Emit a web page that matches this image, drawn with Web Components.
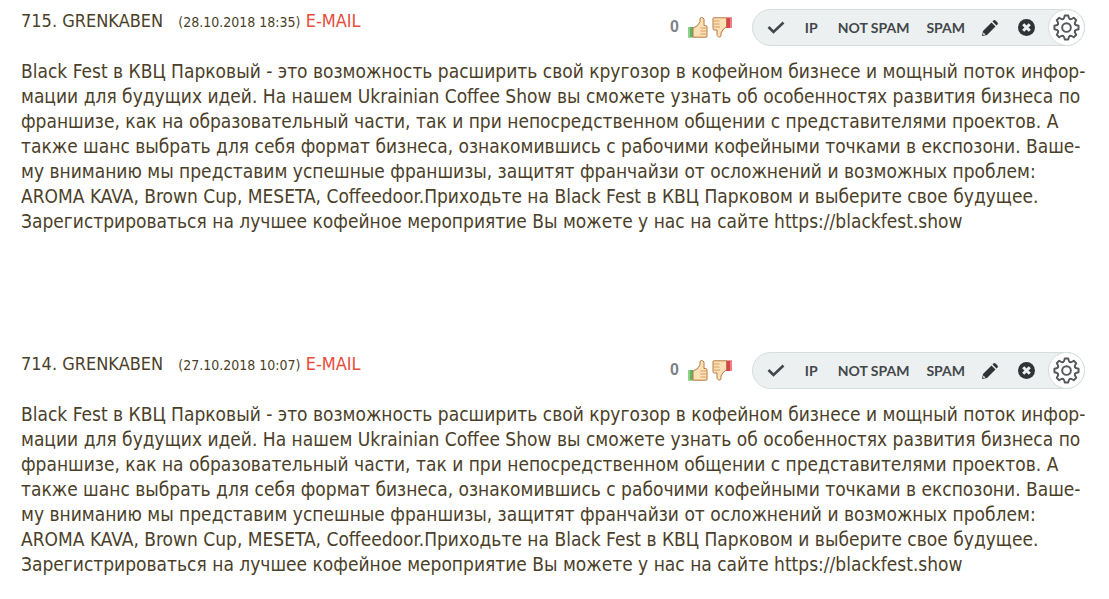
<!DOCTYPE html>
<html lang="ru">
<head>
<meta charset="utf-8">
<meta name="viewport" content="width=device-width, initial-scale=1">
<title>Comments</title>
<style>
  body {
    margin: 0;
    background: #fff;
    color: #4b3f2a;
    font-family: "DejaVu Sans Condensed", "DejaVu Sans", sans-serif;
  }
</style>
</head>
<body>
<comment-list>
  <comment-entry number="715" author="GRENKABEN" date="28.10.2018 18:35" votes="0">
    Black Fest в КВЦ Парковый - это возможность расширить свой кругозор в кофейном бизнесе и мощный поток инфор-<br>
    мации для будущих идей. На нашем Ukrainian Coffee Show вы сможете узнать об особенностях развития бизнеса по<br>
    франшизе, как на образовательный части, так и при непосредственном общении с представителями проектов. А<br>
    также шанс выбрать для себя формат бизнеса, ознакомившись с рабочими кофейными точками в експозони. Ваше-<br>
    му вниманию мы представим успешные франшизы, защитят франчайзи от осложнений и возможных проблем:<br>
    AROMA KAVA, Brown Cup, MESETA, Coffeedoor.Приходьте на Black Fest в КВЦ Парковом и выберите свое будущее.<br>
    Зарегистрироваться на лучшее кофейное мероприятие Вы можете у нас на сайте https://blackfest.show
  </comment-entry>
  <comment-entry number="714" author="GRENKABEN" date="27.10.2018 10:07" votes="0">
    Black Fest в КВЦ Парковый - это возможность расширить свой кругозор в кофейном бизнесе и мощный поток инфор-<br>
    мации для будущих идей. На нашем Ukrainian Coffee Show вы сможете узнать об особенностях развития бизнеса по<br>
    франшизе, как на образовательный части, так и при непосредственном общении с представителями проектов. А<br>
    также шанс выбрать для себя формат бизнеса, ознакомившись с рабочими кофейными точками в експозони. Ваше-<br>
    му вниманию мы представим успешные франшизы, защитят франчайзи от осложнений и возможных проблем:<br>
    AROMA KAVA, Brown Cup, MESETA, Coffeedoor.Приходьте на Black Fest в КВЦ Парковом и выберите свое будущее.<br>
    Зарегистрироваться на лучшее кофейное мероприятие Вы можете у нас на сайте https://blackfest.show
  </comment-entry>
</comment-list>

<script>
/**
 * Stacks the comment entries.
 * @extends HTMLElement
 */
class CommentList extends HTMLElement {
  constructor() {
    super();
    this.attachShadow({ mode: "open" });
  }

  connectedCallback() {
    this.shadowRoot.innerHTML = `
      <style>
        :host {
          display: flex;
          flex-direction: column;
          gap: 118px;
          padding: 9px 24px 20px 21px;
        }
      </style>
      <slot></slot>
    `;
  }
}

/**
 * Vote counter with thumb up and thumb down buttons.
 * @extends HTMLElement
 */
class VoteButtons extends HTMLElement {
  constructor() {
    super();
    this.attachShadow({ mode: "open" });
  }

  connectedCallback() {
    this.shadowRoot.innerHTML = `
      <style>
        :host {
          display: flex;
          align-items: center;
          gap: 4px;
          color: #7d8186;
          font: bold 16px/20px "Liberation Sans", sans-serif;
        }
        span { margin-right: 5px; }
        button {
          display: block;
          padding: 0;
          border: 0;
          background: none;
          cursor: pointer;
        }
        svg { display: block; }
      </style>
      <span>${this.getAttribute("count") || "0"}</span>
      <button type="button" aria-label="Like">
        <svg width="20" height="22" viewBox="0 0 20 22">
          <path d="M0 11h5v10.500H0z" fill="#5fb562"/>
          <path d="M0 11h2v10.500H0z" fill="#93d08f"/>
          <path d="M5 12l4-2 3-4V3q0-1.500 1.500-1.500T16 3v6.500h1.500q1.500 0 1.500 1.500v9.500q0 .7-.7.7H5z" fill="#fbe0b8" stroke="#b9783c"/>
          <path d="M12.500 12h6M12.500 15h6M12.500 18h6" stroke="#d8a063"/>
        </svg>
      </button>
      <button type="button" aria-label="Dislike">
        <svg width="20" height="22" viewBox="0 0 20 22">
          <path d="M14 1.500h6V12h-6z" fill="#d9434f"/>
          <path d="M18 1.500h2V12h-2z" fill="#ee8088"/>
          <path d="M14.500 11l-3 2-2.500 4v2.500Q9 21 7.500 21T5 19.500V14H2.500Q1 14 1 12.500v-10q0-.7.7-.7h12.800z" fill="#fbe0b8" stroke="#b9783c"/>
          <path d="M1.500 5h6M1.500 8h6M2 11h6" stroke="#d8a063"/>
        </svg>
      </button>
    `;
  }
}

/**
 * Rounded bar with the moderation actions.
 * @extends HTMLElement
 */
class ModerationBar extends HTMLElement {
  constructor() {
    super();
    this.attachShadow({ mode: "open" });
  }

  connectedCallback() {
    this.shadowRoot.innerHTML = `
      <style>
        :host {
          display: flex;
          align-items: center;
          box-sizing: border-box;
          height: 37px;
          border: 1px solid #d5dddd;
          border-radius: 19px;
          background: #ecf0f1;
          color: #43474a;
        }
        .actions {
          display: flex;
          align-items: center;
          gap: 17px;
          padding: 0 11px 0 14px;
        }
        button {
          display: block;
          padding: 0;
          border: 0;
          background: none;
          color: inherit;
          font: bold 14px/20px Lato, sans-serif;
          white-space: nowrap;
          cursor: pointer;
        }
        .wide { padding: 0 3px; }
        svg { display: block; }
        .gear {
          display: grid;
          place-items: center;
          box-sizing: border-box;
          width: 37px;
          height: 37px;
          margin: -1px;
          border: 1px solid #d5dddd;
          border-radius: 50%;
          background: #fff;
        }
      </style>
      <div class="actions">
        <button type="button" aria-label="Approve">
          <svg width="18" height="14" viewBox="0 0 18 14">
            <path d="M1.500 6l5 5L16.500 1.500" fill="none" stroke="currentColor" stroke-width="2.600"/>
          </svg>
        </button>
        <button type="button" class="wide">IP</button>
        <button type="button">NOT SPAM</button>
        <button type="button">SPAM</button>
        <button type="button" aria-label="Edit">
          <svg width="16" height="16" viewBox="0 0 16 16" fill="#2f3336">
            <path d="M0 16l1-5L9.500 2.500l4 4L5 15z"/>
            <path d="M10.500 1.500l1-1q1-.8 2 0l2 2q.8 1 0 2l-1 1z"/>
            <path d="M1.500 12.500l2 2-1.800.5-.7-.7z" fill="#ecf0f1"/>
          </svg>
        </button>
        <button type="button" class="wide" aria-label="Delete">
          <svg width="17" height="17" viewBox="0 0 17 17">
            <circle cx="8.500" cy="8.500" r="8.500" fill="#2f3336"/>
            <path d="M5.200 5.200l6.600 6.600M11.800 5.200l-6.600 6.600" stroke="#ecf0f1" stroke-width="3"/>
          </svg>
        </button>
      </div>
      <button type="button" class="gear" aria-label="Settings">
        <svg width="27" height="27" viewBox="-14 -14 28 28" fill="none" stroke="#55595c" stroke-width="2" stroke-linecap="round" stroke-linejoin="round">
          <defs>
            <path id="tooth" d="M-3.600-8.700Q-2.600-9.200-2.300-10.500L-1.800-12.500H1.800L2.300-10.500Q2.600-9.200 3.600-8.700"/>
          </defs>
          <use href="#tooth"/>
          <use href="#tooth" transform="rotate(45)"/>
          <use href="#tooth" transform="rotate(90)"/>
          <use href="#tooth" transform="rotate(135)"/>
          <use href="#tooth" transform="rotate(180)"/>
          <use href="#tooth" transform="rotate(225)"/>
          <use href="#tooth" transform="rotate(270)"/>
          <use href="#tooth" transform="rotate(315)"/>
          <circle r="4.500"/>
        </svg>
      </button>
    `;
  }
}

/**
 * One comment: heading line, votes, moderation bar and the slotted text.
 * @extends HTMLElement
 */
class CommentEntry extends HTMLElement {
  constructor() {
    super();
    this.attachShadow({ mode: "open" });
  }

  connectedCallback() {
    this.shadowRoot.innerHTML = `
      <style>
        :host { display: block; }
        header {
          display: flex;
          align-items: flex-start;
          gap: 20px;
        }
        .heading {
          flex: 1;
          font-size: 18px;
          line-height: 24px;
          white-space: nowrap;
        }
        time {
          margin-left: 10px;
          font-size: 14px;
        }
        a {
          color: #e74c3c;
          text-decoration: none;
        }
        vote-buttons { height: 36px; }
        p {
          margin: 13px -20px 0 0;
          font-size: 19px;
          line-height: 25px;
        }
      </style>
      <header>
        <div class="heading">
          <span>${this.getAttribute("number")}. ${this.getAttribute("author")}</span>
          <time>(${this.getAttribute("date")})</time>
          <a href="#">E-MAIL</a>
        </div>
        <vote-buttons count="${this.getAttribute("votes")}"></vote-buttons>
        <moderation-bar></moderation-bar>
      </header>
      <p><slot></slot></p>
    `;
  }
}

customElements.define("comment-list", CommentList);
customElements.define("vote-buttons", VoteButtons);
customElements.define("moderation-bar", ModerationBar);
customElements.define("comment-entry", CommentEntry);
</script>
</body>
</html>
